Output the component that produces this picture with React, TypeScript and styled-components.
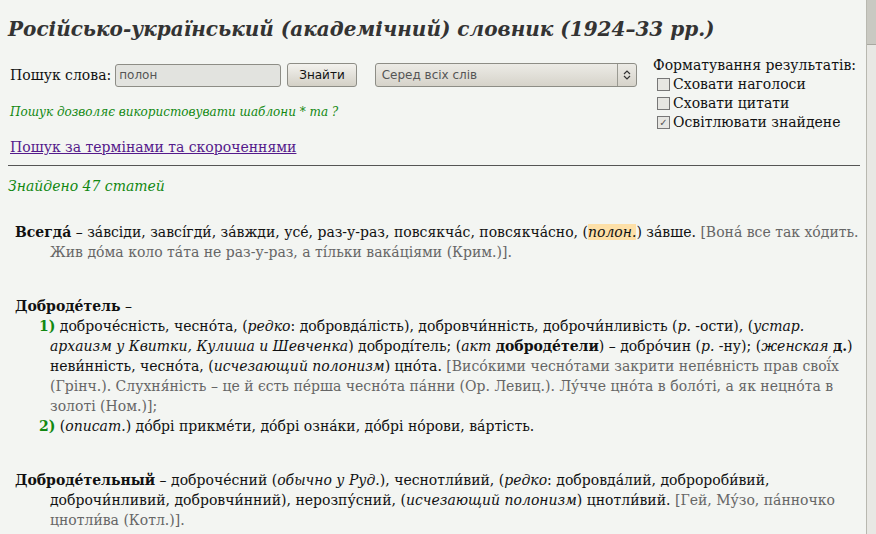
import React from 'react';
import styled, { createGlobalStyle } from 'styled-components';

const Global = createGlobalStyle`
  html, body { margin: 0; padding: 0; background: #f3f5f2; overflow: hidden; }
  body { font-family: "DejaVu Serif", serif; font-size: 14px; color: #111; }
`;

const A = '\u0301';

const Styled = {
  Frame: styled.div`
    display: flex;
    width: 876px;
    height: 534px;
  `,
  Page: styled.div`
    flex: 1;
    padding: 0 6px 0 8px;
    overflow: hidden;
  `,
  Scrollbar: styled.div`
    width: 9px;
    border-left: 1px solid #b8b8b0;
    background: #e8e8e4;
    display: flex;
    flex-direction: column;
  `,
  Thumb: styled.div`
    height: 44px;
    background: #c9c9c2;
    border-bottom: 1px solid #a8a8a0;
  `,
  Title: styled.h1`
    margin: 17px 0 0;
    font-size: 20px;
    font-style: italic;
    font-weight: bold;
    color: #333;
  `,
  Top: styled.div`
    display: flex;
    justify-content: space-between;
    margin-top: 22px;
  `,
  Left: styled.div`
    display: flex;
    flex-direction: column;
    padding-left: 2px;
  `,
  FormRow: styled.div`
    display: flex;
    align-items: center;
    gap: 4px;
  `,
  Input: styled.input`
    width: 166px;
    height: 23px;
    box-sizing: border-box;
    border: 1px solid #8d8d86;
    border-radius: 3px;
    background: #e2e3df;
    font: 12px "DejaVu Sans", sans-serif;
    color: #555;
    padding: 0 3px;
  `,
  Button: styled.button`
    height: 24px;
    padding: 0 11px;
    margin-left: 2px;
    border: 1px solid #8d8d86;
    border-radius: 3px;
    background: linear-gradient(#f3f2ee, #d3d0c6);
    font: 12px "DejaVu Sans", sans-serif;
    color: #111;
  `,
  Select: styled.div`
    margin-left: 14px;
    width: 262px;
    height: 24px;
    box-sizing: border-box;
    display: flex;
    align-items: center;
    justify-content: space-between;
    border: 1px solid #8d8d86;
    border-radius: 3px;
    background: linear-gradient(#ecebe6, #d6d3ca);
    font: 12px "DejaVu Sans", sans-serif;
    color: #555;
    padding-left: 6px;
  `,
  SelectArrow: styled.span`
    width: 18px;
    height: 100%;
    border-left: 1px solid #9a9a92;
    display: flex;
    align-items: center;
    justify-content: center;
  `,
  Hint: styled.p`
    margin: 18px 0 0;
    font-style: italic;
    font-size: 12px;
    color: #118811;
  `,
  Link: styled.a`
    margin-top: 20px;
    color: #551a8b;
    text-decoration: underline;
  `,
  Options: styled.div`
    display: flex;
    flex-direction: column;
    gap: 3px;
    margin-top: -6px;
    padding-right: 4px;
  `,
  Check: styled.label`
    display: flex;
    align-items: center;
    gap: 3px;
    padding-left: 4px;
  `,
  Box: styled.span`
    width: 11px;
    height: 11px;
    border: 1px solid #777;
    background: #e6e6e2;
    font-size: 10px;
    line-height: 11px;
    text-align: center;
    color: #555;
    font-family: "DejaVu Sans", sans-serif;
  `,
  Rule: styled.hr`
    margin: 10px 0 0;
    border: 0;
    border-top: 1px solid #555;
  `,
  Found: styled.p`
    margin: 12px 0 0;
    font-style: italic;
    color: #118811;
  `,
  Entry: styled.div<{ $gap: number }>`
    margin-top: ${(p) => p.$gap}px;
    line-height: 20px;
    padding-left: 42px;
    text-indent: -35px;
  `,
  Head: styled.b`
    font-weight: bold;
  `,
  Senses: styled.div`
    text-indent: 0;
    margin-left: -42px;
    & > div {
      padding-left: 42px;
      text-indent: -11px;
    }
  `,
  Num: styled.b`
    color: #118811;
  `,
  Quote: styled.span`
    color: #666;
  `,
  Hl: styled.span`
    background: #fde0a8;
  `,
};

export default function App() {
  return (
    <>
      <Global />
      <Styled.Frame>
        <Styled.Page>
          <Styled.Title>Російсько-український (академічний) словник (1924–33 рр.)</Styled.Title>
          <Styled.Top>
            <Styled.Left>
              <Styled.FormRow>
                <span>Пошук слова:</span>
                <Styled.Input defaultValue="полон" />
                <Styled.Button>Знайти</Styled.Button>
                <Styled.Select>
                  Серед всіх слів
                  <Styled.SelectArrow>
                    <svg width="8" height="12" viewBox="0 0 8 12">
                      <path d="M1 5 L4 2 L7 5 M1 7 L4 10 L7 7" fill="none" stroke="#333" strokeWidth="1.2" />
                    </svg>
                  </Styled.SelectArrow>
                </Styled.Select>
              </Styled.FormRow>
              <Styled.Hint>Пошук дозволяє використовувати шаблони * та ?</Styled.Hint>
              <Styled.Link href="#">Пошук за термінами та скороченнями</Styled.Link>
            </Styled.Left>
            <Styled.Options>
              <span>Форматування результатів:</span>
              <Styled.Check><Styled.Box />Сховати наголоси</Styled.Check>
              <Styled.Check><Styled.Box />Сховати цитати</Styled.Check>
              <Styled.Check><Styled.Box>✓</Styled.Box>Освітлювати знайдене</Styled.Check>
            </Styled.Options>
          </Styled.Top>
          <Styled.Rule />
          <Styled.Found>Знайдено 47 статей</Styled.Found>

          <Styled.Entry $gap={28}>
            <Styled.Head>{`Всегда${A}`}</Styled.Head> – {`за${A}всіди, завсі${A}гди${A}, за${A}вжди, усе${A}, раз-у-раз, повсякча${A}с, повсякча${A}сно, (`}
            <Styled.Hl><i>полон.</i></Styled.Hl>{`) за${A}вше. `}
            <Styled.Quote>{`[Вона${A} все так хо${A}дить. Жив до${A}ма коло та${A}та не раз-у-раз, а ті${A}льки вака${A}ціями (Крим.)].`}</Styled.Quote>
          </Styled.Entry>

          <Styled.Entry $gap={34}>
            <Styled.Head>{`Доброде${A}тель`}</Styled.Head> –
            <Styled.Senses>
              <div>
                <Styled.Num>1)</Styled.Num>{` доброче${A}сність, чесно${A}та, (`}<i>редко</i>{`: добровда${A}лість), добровчи${A}нність, доброчи${A}нливість (`}<i>р.</i>{` -ости), (`}<i>устар. архаизм у Квитки, Кулиша и Шевченка</i>{`) добродí${''}тель; (`}<i>акт</i> <b>{`доброде${A}тели`}</b>{`) – добро${A}чин (`}<i>р.</i>{` -ну); (`}<i>женская</i> <b>д.</b>{`) неви${A}нність, чесно${A}та, (`}<i>исчезающий полонизм</i>{`) цно${A}та. `}
                <Styled.Quote>{`[Висо${A}кими чесно${A}тами закрити непе${A}вність прав свої${A}х (Грінч.). Слухня${A}ність – це й єсть пе${A}рша чесно${A}та па${A}нни (Ор. Левиц.). Лу${A}чче цно${A}та в боло${A}ті, а як нецно${A}та в золоті (Ном.)];`}</Styled.Quote>
              </div>
              <div>
                <Styled.Num>2)</Styled.Num>{` (`}<i>описат.</i>{`) до${A}брі прикме${A}ти, до${A}брі озна${A}ки, до${A}брі но${A}рови, ва${A}ртість.`}
              </div>
            </Styled.Senses>
          </Styled.Entry>

          <Styled.Entry $gap={34}>
            <Styled.Head>{`Доброде${A}тельный`}</Styled.Head>{` – доброче${A}сний (`}<i>обычно у Руд.</i>{`), чеснотли${A}вий, (`}<i>редко</i>{`: добровда${A}лий, добророби${A}вий, доброчи${A}нливий, добровчи${A}нний), нерозпу${A}сний, (`}<i>исчезающий полонизм</i>{`) цнотли${A}вий. `}
            <Styled.Quote>{`[Гей, Му${A}зо, па${A}нночко цнотли${A}ва (Котл.)].`}</Styled.Quote>
          </Styled.Entry>
        </Styled.Page>
        <Styled.Scrollbar>
          <Styled.Thumb />
        </Styled.Scrollbar>
      </Styled.Frame>
    </>
  );
}
